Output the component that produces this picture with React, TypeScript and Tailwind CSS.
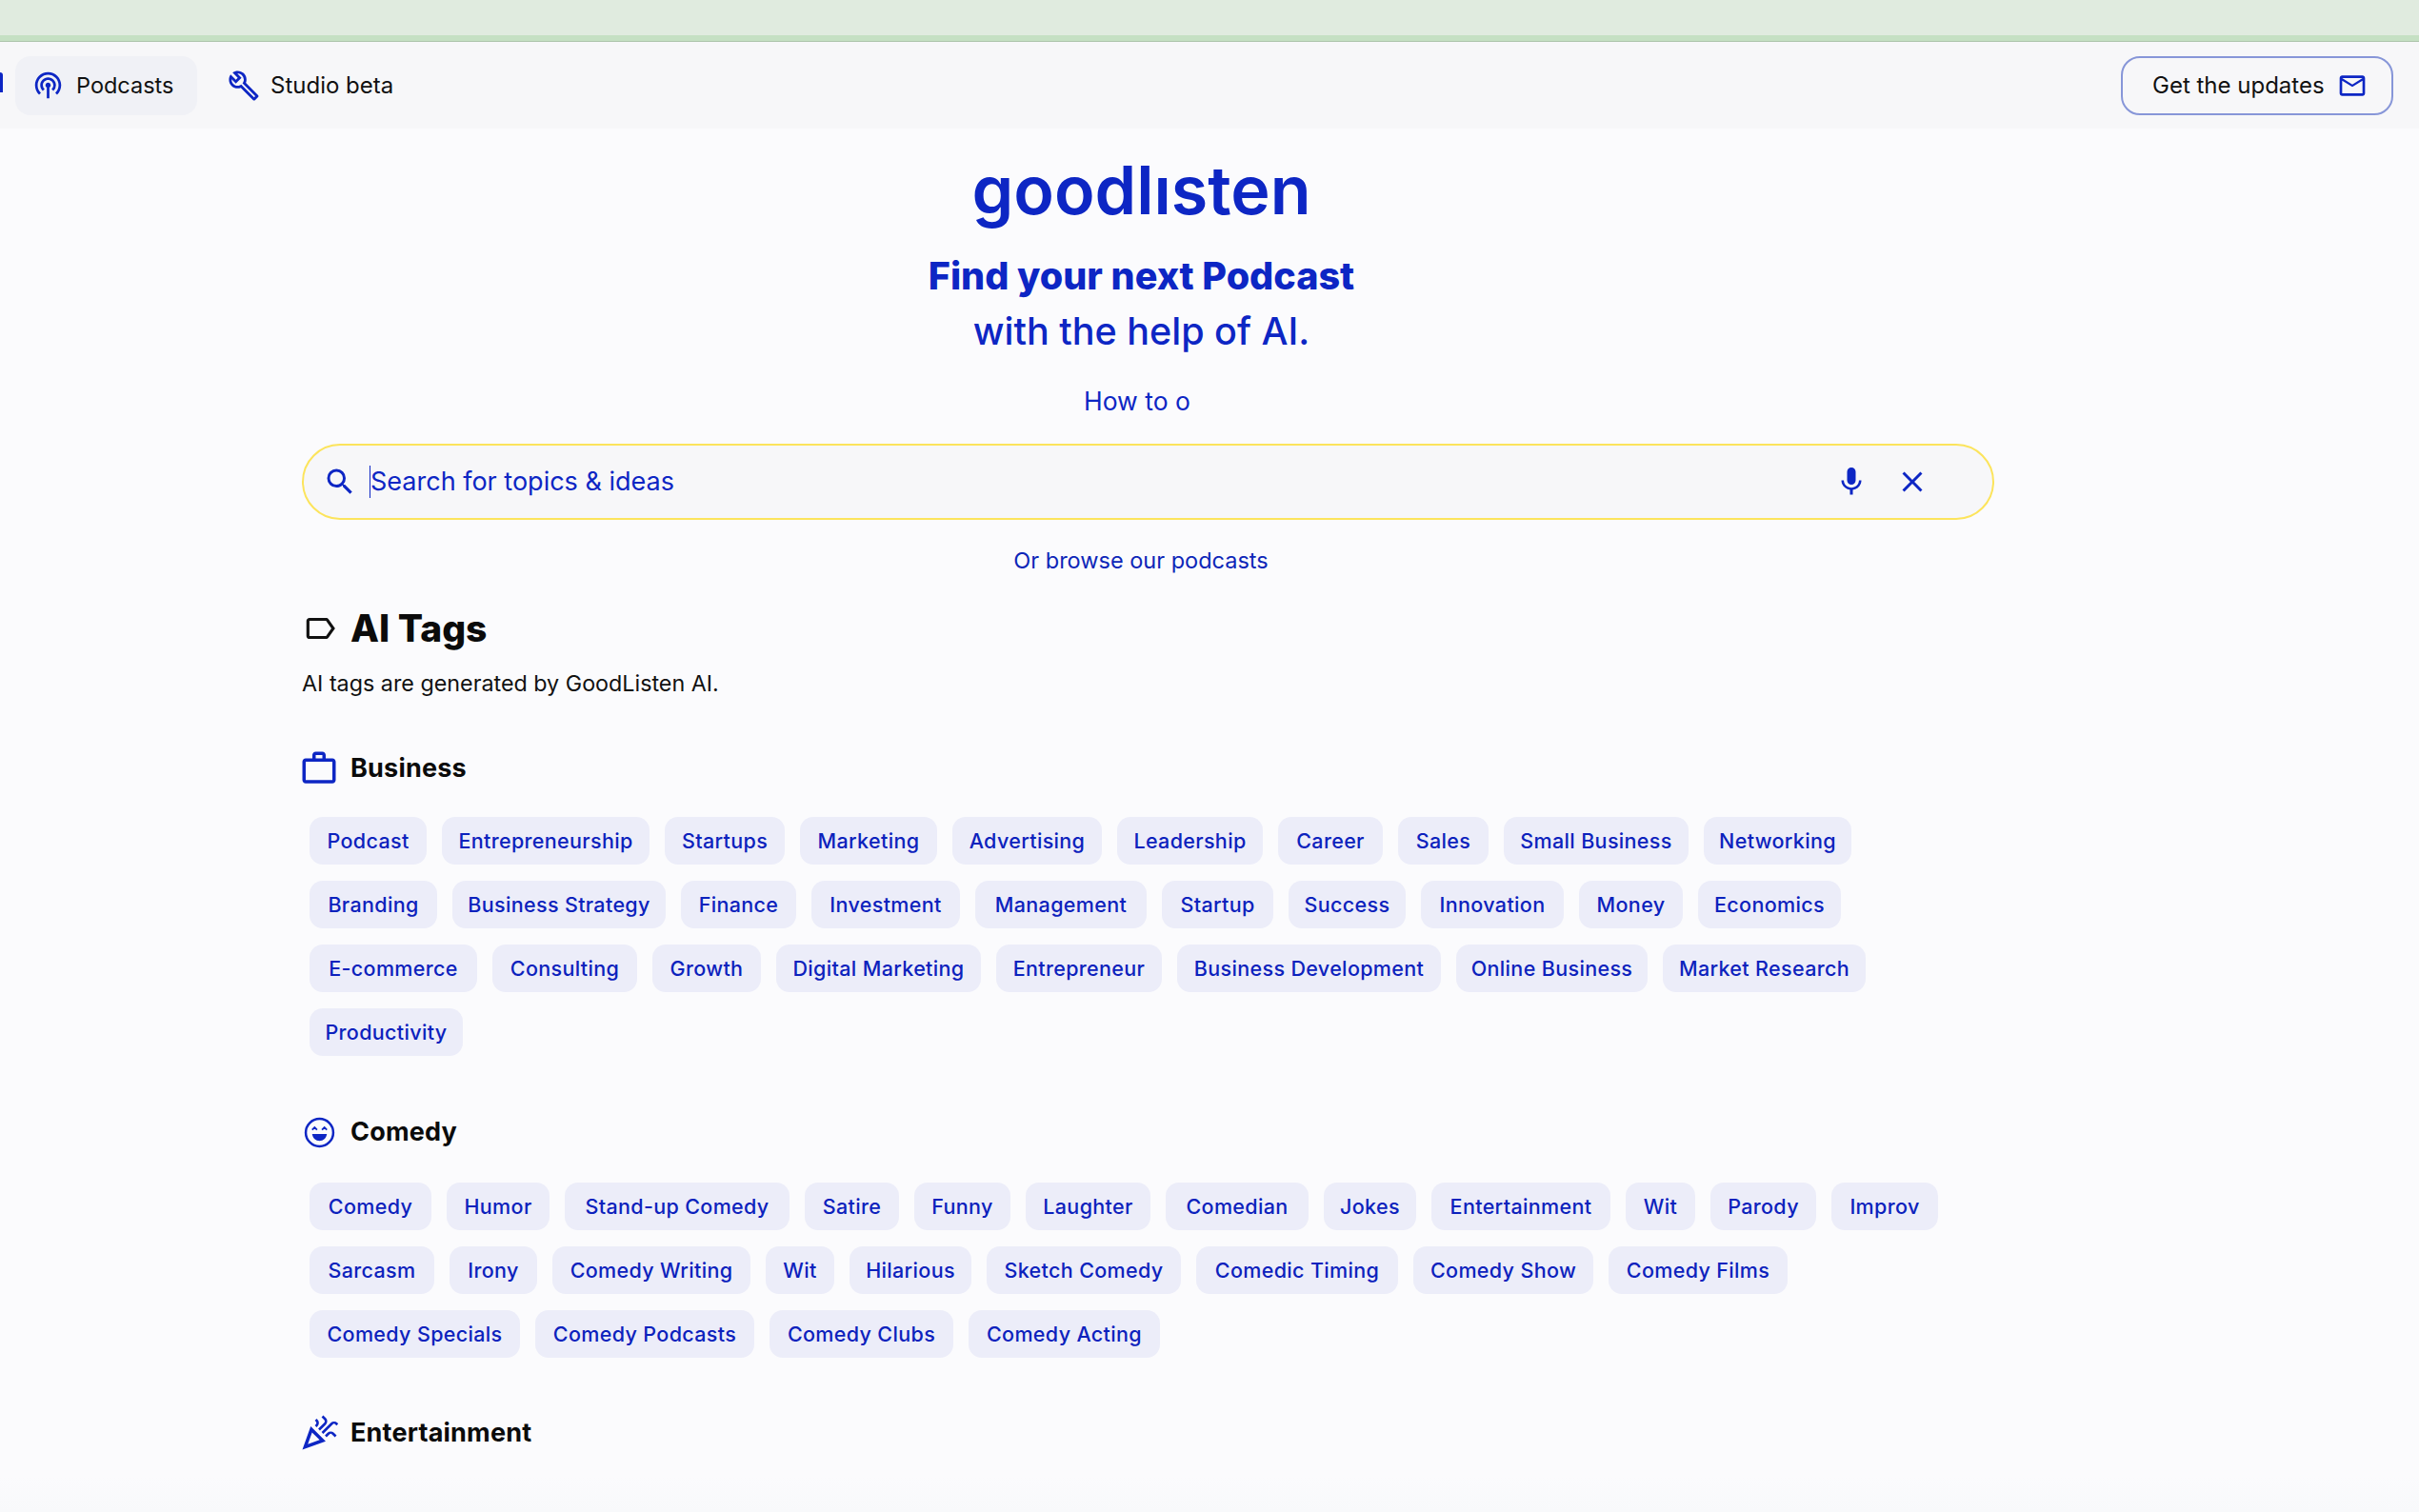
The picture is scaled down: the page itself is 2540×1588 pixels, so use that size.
import {
  MdClose,
  MdLabelOutline,
  MdMailOutline,
  MdMic,
  MdOutlineBuild,
  MdOutlineCelebration,
  MdOutlinePodcasts,
  MdOutlineWorkOutline,
  MdSearch,
} from "react-icons/md";

type TagItem = [string, string];

const business: TagItem[][] = [
  [
    ["Podcast", "w-[123px]"],
    ["Entrepreneurship", "w-[218px]"],
    ["Startups", "w-[126px]"],
    ["Marketing", "w-[144px]"],
    ["Advertising", "w-[157px]"],
    ["Leadership", "w-[153px]"],
    ["Career", "w-[110px]"],
    ["Sales", "w-[95px]"],
    ["Small Business", "w-[194px]"],
    ["Networking", "w-[155px]"],
  ],
  [
    ["Branding", "w-[134px]"],
    ["Business Strategy", "w-[224px]"],
    ["Finance", "w-[121px]"],
    ["Investment", "w-[156px]"],
    ["Management", "w-[180px]"],
    ["Startup", "w-[117px]"],
    ["Success", "w-[123px]"],
    ["Innovation", "w-[150px]"],
    ["Money", "w-[109px]"],
    ["Economics", "w-[150px]"],
  ],
  [
    ["E-commerce", "w-[176px]"],
    ["Consulting", "w-[152px]"],
    ["Growth", "w-[114px]"],
    ["Digital Marketing", "w-[215px]"],
    ["Entrepreneur", "w-[174px]"],
    ["Business Development", "w-[277px]"],
    ["Online Business", "w-[201px]"],
    ["Market Research", "w-[213px]"],
  ],
  [["Productivity", "w-[161px]"]],
];

const comedy: TagItem[][] = [
  [
    ["Comedy", "w-[128px]"],
    ["Humor", "w-[108px]"],
    ["Stand-up Comedy", "w-[236px]"],
    ["Satire", "w-[99px]"],
    ["Funny", "w-[101px]"],
    ["Laughter", "w-[131px]"],
    ["Comedian", "w-[150px]"],
    ["Jokes", "w-[97px]"],
    ["Entertainment", "w-[188px]"],
    ["Wit", "w-[73px]"],
    ["Parody", "w-[111px]"],
    ["Improv", "w-[112px]"],
  ],
  [
    ["Sarcasm", "w-[131px]"],
    ["Irony", "w-[92px]"],
    ["Comedy Writing", "w-[208px]"],
    ["Wit", "w-[72px]"],
    ["Hilarious", "w-[128px]"],
    ["Sketch Comedy", "w-[204px]"],
    ["Comedic Timing", "w-[212px]"],
    ["Comedy Show", "w-[189px]"],
    ["Comedy Films", "w-[188px]"],
  ],
  [
    ["Comedy Specials", "w-[221px]"],
    ["Comedy Podcasts", "w-[230px]"],
    ["Comedy Clubs", "w-[193px]"],
    ["Comedy Acting", "w-[201px]"],
  ],
];

function SmileIcon() {
  return (
    <svg viewBox="0 0 32 32" className="ml-[2px] h-[33px] w-[33px] shrink-0 text-[#0d26c4]" fill="none" stroke="currentColor">
      <circle cx="16" cy="16" r="14" strokeWidth="2.4" />
      <path d="M8.500 13.200 11 10.800l2.500 2.400M18.500 13.200l2.500-2.400 2.500 2.400" strokeWidth="1.800" />
      <path d="M8.500 17.500h15c-.6 4.200-3.600 7-7.500 7s-6.900-2.800-7.500-7Z" fill="currentColor" stroke="none" />
    </svg>
  );
}

function TagRows({ rows }: { rows: TagItem[][] }) {
  return (
    <div className="flex flex-col gap-[17px] pl-[8px]">
      {rows.map((row, i) => (
        <div key={i} className="flex gap-[16px]">
          {row.map(([label, width], j) => (
            <span
              key={j}
              className={`flex h-[50px] items-center justify-center rounded-[14px] bg-[#ecedf9] text-[21.5px] font-medium tracking-[0.35px] whitespace-nowrap text-[#0c22bd] ${width}`}
            >
              {label}
            </span>
          ))}
        </div>
      ))}
    </div>
  );
}

function SectionHead({ icon, title }: { icon: React.ReactNode; title: string }) {
  return (
    <div className="flex h-[40px] items-center gap-[17px]">
      <div className="flex w-[34px] justify-center">{icon}</div>
      <h3 className="text-[27px] font-bold tracking-[0.2px] text-[#0b0b0b]">{title}</h3>
    </div>
  );
}

export default function App() {
  return (
    <div className="relative h-[1588px] overflow-hidden bg-[#fbfbfd] font-['Inter',sans-serif]">
      {/* top banner */}
      <div className="flex h-[44px] flex-col justify-end border-b border-[#aec4ac] bg-[#e0ebdf]">
        <div className="h-[6px] bg-[#c5e0c3]" />
      </div>

      {/* nav */}
      <nav className="flex h-[91px] items-center justify-between bg-[#f7f7f9] pr-[27px] pl-[16px]">
        <div className="absolute top-[76px] left-0 h-[21px] w-[3px] rounded-tr-[3px] bg-[#0d26c4]" />
        <div className="flex items-center gap-[32px]">
          <div className="flex h-[62px] w-[191px] items-center gap-[13px] rounded-[16px] bg-[#f0f1f6] pl-[18px]">
            <MdOutlinePodcasts className="text-[33px] text-[#0d26c4]" />
            <span className="text-[23.500px] text-[#111]">Podcasts</span>
          </div>
          <div className="flex items-center gap-[11px]">
            <MdOutlineBuild className="text-[34px] text-[#0d26c4]" />
            <span className="text-[24px] text-[#111]">Studio beta</span>
          </div>
        </div>
        <div className="flex h-[62px] w-[286px] items-center gap-[13px] rounded-[20px] border-2 border-[#8796d8] pl-[31px]">
          <span className="text-[24px] text-[#111]">Get the updates</span>
          <MdMailOutline className="text-[32px] text-[#0d26c4]" />
        </div>
      </nav>

      <main className="ml-[317px] w-[1777px]">
        <div className="flex flex-col items-center pr-[14px]">
          <div className="mt-[20px] text-[70px] leading-[90px] font-semibold text-[#0d26c4]">goodlısten</div>
          <div className="mt-[16px] text-[39.500px] leading-[58px] font-extrabold text-[#0d26c4]">Find your next Podcast</div>
          <div className="text-[39.500px] leading-[58px] font-medium text-[#0d26c4]">with the help of AI.</div>
        </div>
        <div className="mt-[26px] pl-[821px] text-[26.500px] leading-[36px] text-[#0d26c4]">How to o</div>

        {/* search */}
        <div className="mt-[27px] flex h-[80px] items-center rounded-[40px] border-2 border-[#fce45c] bg-[#f7f7f9] pr-[66px] pl-[20px]">
          <MdSearch className="text-[36px] text-[#0d26c4]" />
          <div className="ml-[13px] h-[34px] w-px bg-[#0d26c4]" />
          <span className="flex-1 text-[27px] text-[#0d26c4]">Search for topics &amp; ideas</span>
          <MdMic className="mr-[28px] text-[36px] text-[#0d26c4]" />
          <MdClose className="text-[36px] text-[#0d26c4]" />
        </div>

        <div className="mt-[27px] pr-[15px] text-center text-[23.500px] leading-[32px] text-[#0d26b8]">Or browse our podcasts</div>

        <div className="mt-[30px] flex h-[50px] items-center gap-[13px]">
          <MdLabelOutline className="text-[38px] text-[#111]" />
          <h2 className="text-[39px] font-extrabold text-[#0b0b0b]">AI Tags</h2>
        </div>
        <p className="mt-[16px] text-[23.300px] leading-[34px] text-[#111]">AI tags are generated by GoodListen AI.</p>

        <div className="mt-[52px]">
          <SectionHead icon={<MdOutlineWorkOutline className="ml-[1px] shrink-0 text-[42px] text-[#0d26c4]" />} title="Business" />
        </div>
        <div className="mt-[31px]">
          <TagRows rows={business} />
        </div>

        <div className="mt-[60px]">
          <SectionHead icon={<SmileIcon />} title="Comedy" />
        </div>
        <div className="mt-[33px]">
          <TagRows rows={comedy} />
        </div>

        <div className="mt-[59px]">
          <SectionHead icon={<MdOutlineCelebration className="ml-[1px] shrink-0 text-[42px] text-[#0d26c4]" />} title="Entertainment" />
        </div>
      </main>

      {/* fade at the bottom of the scroll area */}
      <div className="absolute inset-x-0 bottom-0 h-[38px] bg-gradient-to-b from-[#fbfbfd] to-[#f8f9fb]" />
    </div>
  );
}
